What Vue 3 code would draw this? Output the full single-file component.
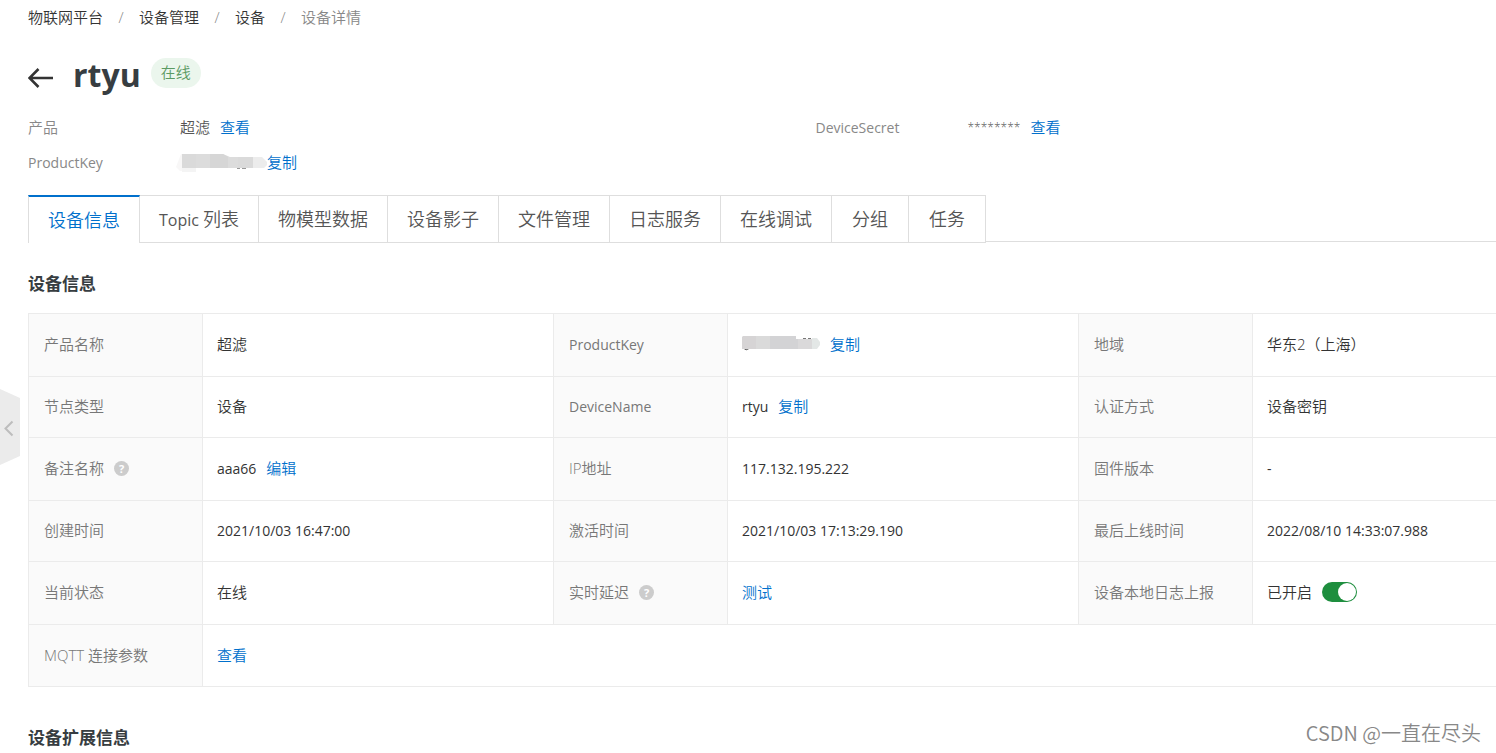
<script setup>
import { ref } from 'vue'

const crumbs = ['物联网平台', '设备管理', '设备']
const tabs = [
  { name: '设备信息' },
  { latin: 'Topic', name: '列表' },
  { name: '物模型数据' },
  { name: '设备影子' },
  { name: '文件管理' },
  { name: '日志服务' },
  { name: '在线调试' },
  { name: '分组' },
  { name: '任务' },
]
const activeTab = ref('设备信息')
const logEnabled = ref(true)

const rows = [
  [
    { label: '产品名称', value: '超滤' },
    { label: 'ProductKey', latin: true, masked: true, link: '复制' },
    { label: '地域', value: '华东2（上海）' },
  ],
  [
    { label: '节点类型', value: '设备' },
    { label: 'DeviceName', latin: true, value: 'rtyu', link: '复制' },
    { label: '认证方式', value: '设备密钥' },
  ],
  [
    { label: '备注名称', help: true, value: 'aaa66', link: '编辑' },
    { label: 'IP地址', value: '117.132.195.222' },
    { label: '固件版本', value: '-' },
  ],
  [
    { label: '创建时间', value: '2021/10/03 16:47:00' },
    { label: '激活时间', value: '2021/10/03 17:13:29.190' },
    { label: '最后上线时间', value: '2022/08/10 14:33:07.988' },
  ],
  [
    { label: '当前状态', value: '在线' },
    { label: '实时延迟', help: true, link: '测试' },
    { label: '设备本地日志上报', toggle: true, value: '已开启' },
  ],
  [{ label: 'MQTT 连接参数', link: '查看', span: 5 }],
]

const isLatin = (text) => /^[\x20-\x7e]+$/.test(text)
</script>

<template>
  <div class="page">
    <button class="collapse" type="button" aria-label="收起">
      <svg width="20" height="76" viewBox="0 0 20 76">
        <path d="M0 0 20 9V67L0 76Z" fill="#ebebeb" />
        <path d="M12.5 32.5 5.5 39.5 12.5 46.5" fill="none" stroke="#bdbdbd" stroke-width="2" />
      </svg>
    </button>

    <main class="content">
      <nav class="crumbs">
        <template v-for="c in crumbs" :key="c">
          <a href="#">{{ c }}</a><span class="sep">/</span>
        </template>
        <span class="current">设备详情</span>
      </nav>

      <header class="title">
        <button class="back" type="button" aria-label="返回">
          <svg width="26" height="20" viewBox="0 0 26 20">
            <path d="M25 10H2M10.5 1 1.5 10 10.5 19" fill="none" stroke="#333" stroke-width="2.6" />
          </svg>
        </button>
        <h1>rtyu</h1>
        <span class="badge">在线</span>
      </header>

      <dl class="summary">
        <div class="pair">
          <dt>产品</dt>
          <dd>超滤<a class="next" href="#">查看</a></dd>
        </div>
        <div class="pair">
          <dt class="latin">DeviceSecret</dt>
          <dd><span class="secret">********</span><a class="next" href="#">查看</a></dd>
        </div>
        <div class="pair">
          <dt class="latin">ProductKey</dt>
          <dd>
            <svg class="mask" width="87" height="20" viewBox="0 0 87 20">
              <path d="M1 1H10V18H0L-4 14Z" fill="#f8f7f7" />
              <path d="M2 1H16V15H2Z" fill="#dadada" />
              <path d="M2 15H16V19H2Z" fill="#f4f4f4" />
              <path d="M16 1H43L50 4H58V15H16Z" fill="#dcdcdc" />
              <path d="M30 1H43L48 4V15H30Z" fill="#d6d6d6" />
              <path d="M58 4H73V15H58Z" fill="#dadada" />
              <path d="M73 4H82L87 9V12L84 15H73Z" fill="#ececec" />
              <path d="M57 15.5H60M62 15.5H66" stroke="#999" fill="none" />
            </svg><a href="#">复制</a>
          </dd>
        </div>
      </dl>

      <div class="tabs" role="tablist">
        <button
          v-for="t in tabs"
          :key="t.name"
          type="button"
          role="tab"
          class="tab"
          :class="{ active: t.name === activeTab }"
          :aria-selected="t.name === activeTab"
          @click="activeTab = t.name"
        ><span v-if="t.latin" class="tab-latin">{{ t.latin + ' ' }}</span>{{ t.name }}</button>
      </div>

      <h2>设备信息</h2>
      <table>
        <colgroup>
          <template v-for="n in 3" :key="n"><col class="col-label"><col></template>
        </colgroup>
        <tbody>
          <tr v-for="(row, i) in rows" :key="i">
            <template v-for="cell in row" :key="cell.label">
              <th scope="row">
                <div class="cell">
                  <label v-if="cell.toggle" for="log-switch">{{ cell.label }}</label>
                  <span v-else :class="{ latin: cell.latin }">{{ cell.label }}</span>
                  <button v-if="cell.help" class="help" type="button">?</button>
                </div>
              </th>
              <td :colspan="cell.span || 1">
                <div class="cell">
                  <svg v-if="cell.masked" class="mask-key" width="78" height="20" viewBox="0 0 78 20">
                    <path d="M2 14.5Q4 17 7 14.5" fill="none" stroke="#444" />
                    <path d="M61 4.5H64M66 4.5H69" fill="none" stroke="#777" />
                    <path d="M0 3 1 2H28V15H0Z" fill="#d6d4d5" />
                    <path d="M14 2H28V15H14Z" fill="#dadada" />
                    <path d="M28 2H54V5H70V15H28Z" fill="#d3d3d5" />
                    <path d="M56 5H70V15H56Z" fill="#dad9da" />
                    <path d="M70 4H75L78 8V11L75 15H70Z" fill="#e3e7e6" />
                  </svg>
                  <span v-if="cell.value" :class="{ latin: isLatin(cell.value) }">{{ cell.value }}</span>
                  <a v-if="cell.link" href="#">{{ cell.link }}</a>
                  <input v-if="cell.toggle" id="log-switch" v-model="logEnabled" class="switch" type="checkbox" role="switch">
                </div>
              </td>
            </template>
          </tr>
        </tbody>
      </table>

      <h2 class="later">设备扩展信息</h2>
    </main>

    <div class="watermark">CSDN @一直在尽头</div>
  </div>
</template>

<style>
body {
  margin: 0;
  background: #fff;
}
</style>

<style scoped>
.page {
  position: relative;
  min-height: 100vh;
  overflow: hidden;
  box-sizing: border-box;
  font-family: "Open Sans", "Noto Sans CJK SC", sans-serif;
  font-size: 15px;
  font-weight: 350;
  color: #333;
}
.page * {
  box-sizing: border-box;
}
button {
  padding: 0;
  border: 0;
  background: none;
  font-family: inherit;
  font-weight: inherit;
  cursor: pointer;
}
a {
  color: #0070cc;
  text-decoration: none;
}
.latin {
  font-size: 14px;
  font-weight: 400;
}
.collapse {
  position: absolute;
  left: 0;
  top: 389px;
}
.collapse svg,
.back svg,
.mask,
.mask-key {
  display: block;
}
.content {
  margin-left: 28px;
  margin-right: -107px;
}
.crumbs {
  display: flex;
  padding-top: 5px;
  line-height: 24px;
}
.crumbs a {
  color: #333;
}
.sep {
  width: 36px;
  text-align: center;
  color: #888;
}
.current {
  color: #888;
}
.title {
  display: flex;
  align-items: center;
  height: 60px;
  margin-top: 17px;
}
.back {
  margin-top: 4px;
}
h1 {
  margin: 0 10px 2px 19px;
  font-size: 32px;
  line-height: 40px;
  font-weight: 700;
  color: #373d41;
}
.badge {
  width: 50px;
  height: 30px;
  margin-bottom: 6px;
  border-radius: 15px;
  background: #ebf6ed;
  color: #5b9a63;
  line-height: 28px;
  text-align: center;
}
.summary {
  display: grid;
  grid-template-columns: 1fr 1fr;
  margin: 4px 0 15px;
  line-height: 35px;
}
.pair {
  display: flex;
}
dt {
  width: 152px;
  color: #888;
}
dd {
  display: flex;
  align-items: center;
  margin: 0;
  color: #555;
}
.secret {
  font-size: 12px;
}
.next {
  margin-left: 10px;
}
.mask {
  overflow: visible;
}
.tabs {
  display: flex;
  height: 47px;
  border-bottom: 1px solid #dedede;
}
.tab {
  min-width: 77px;
  height: 48px;
  padding: 0 19px;
  border: 1px solid #dedede;
  border-left-width: 0;
  background: #fff;
  font-size: 18px;
  line-height: 24px;
  color: #555;
}
.tab-latin {
  font-size: 16px;
  font-weight: 400;
  white-space: pre;
}
.tab:first-child {
  border-left-width: 1px;
}
.tab.active {
  border-top: 2px solid #0070cc;
  border-bottom: 0;
  color: #0070cc;
}
h2 {
  margin: 28px 0 15px;
  font-size: 17px;
  line-height: 28px;
  font-weight: 700;
  color: #373d41;
}
h2.later {
  margin: 37px 0 0;
}
table {
  width: 100%;
  table-layout: fixed;
  border-spacing: 0;
  border-bottom: 1px solid #ebebeb;
}
.col-label {
  width: 174px;
}
tr:nth-child(odd) {
  height: 63px;
}
tr:nth-child(even) {
  height: 61px;
}
tr:last-child {
  height: 62px;
}
th,
td {
  padding: 0 15px 2px;
  border-top: 1px solid #ebebeb;
  border-left: 1px solid #ebebeb;
  text-align: left;
  font-weight: inherit;
}
td {
  padding-left: 14px;
}
th {
  background: #fafafa;
  color: #777;
}
.cell {
  display: flex;
  align-items: center;
  gap: 10px;
  line-height: 24px;
}
.cell .latin {
  padding-top: 2px;
}
.help {
  width: 15px;
  height: 15px;
  border-radius: 50%;
  background: #ccc;
  color: #fff;
  font-size: 11px;
  line-height: 15px;
  font-weight: 700;
}
.switch {
  appearance: none;
  display: flex;
  align-items: center;
  width: 35px;
  height: 20px;
  margin: 0;
  padding: 0 1px;
  border-radius: 10px;
  background: #ccc;
}
.switch::before {
  content: "";
  width: 18px;
  height: 18px;
  border-radius: 50%;
  background: #fff;
}
.switch:checked {
  justify-content: flex-end;
  background: #1e8e3e;
}
.watermark {
  position: absolute;
  right: 15px;
  bottom: 5px;
  font-family: "Noto Sans CJK SC", sans-serif;
  font-size: 20px;
  line-height: 30px;
  color: #888;
}
</style>
